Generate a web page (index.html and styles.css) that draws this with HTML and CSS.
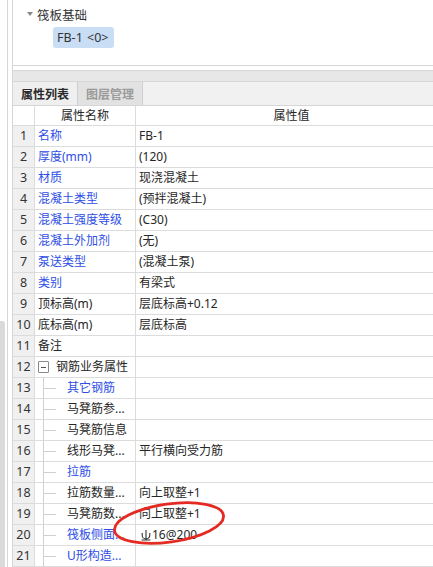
FILE: index.html
```html
<!DOCTYPE html>
<html>
<head>
<meta charset="utf-8">
<link rel="stylesheet" href="styles.css">
</head>
<body>
<div class="app">
  <div class="side">
    <div class="side-fill"></div>
    <div class="side-thumb"></div>
  </div>
  <div class="main">
    <div class="tree-panel">
      <div class="tree-node"><span class="caret"></span><span>筏板基础</span></div>
      <div class="tree-leaf"><span class="badge">FB-1 &lt;0&gt;</span></div>
    </div>
    <div class="grey-bar"></div>
    <div class="tabs">
      <div class="tab active">属性列表</div>
      <div class="tab">图层管理</div>
    </div>
    <div class="grid">
      <div class="row head"><div class="num"></div><div class="name center">属性名称</div><div class="val center">属性值</div></div>
      <div class="row"><div class="num">1</div><div class="name link">名称</div><div class="val">FB-1</div></div>
      <div class="row"><div class="num">2</div><div class="name link">厚度(mm)</div><div class="val">(120)</div></div>
      <div class="row"><div class="num">3</div><div class="name link">材质</div><div class="val">现浇混凝土</div></div>
      <div class="row"><div class="num">4</div><div class="name link">混凝土类型</div><div class="val">(预拌混凝土)</div></div>
      <div class="row"><div class="num">5</div><div class="name link">混凝土强度等级</div><div class="val">(C30)</div></div>
      <div class="row"><div class="num">6</div><div class="name link">混凝土外加剂</div><div class="val">(无)</div></div>
      <div class="row"><div class="num">7</div><div class="name link">泵送类型</div><div class="val">(混凝土泵)</div></div>
      <div class="row"><div class="num">8</div><div class="name link">类别</div><div class="val">有梁式</div></div>
      <div class="row"><div class="num">9</div><div class="name">顶标高(m)</div><div class="val">层底标高+0.12</div></div>
      <div class="row"><div class="num">10</div><div class="name">底标高(m)</div><div class="val">层底标高</div></div>
      <div class="row"><div class="num">11</div><div class="name">备注</div><div class="val"></div></div>
      <div class="row"><div class="num">12</div><div class="name group"><span class="toggle"></span><span>钢筋业务属性</span></div><div class="val"></div></div>
      <div class="row"><div class="num">13</div><div class="name child"><span class="guide"></span><span class="link">其它钢筋</span></div><div class="val"></div></div>
      <div class="row"><div class="num">14</div><div class="name child"><span class="guide"></span><span>马凳筋参...</span></div><div class="val"></div></div>
      <div class="row"><div class="num">15</div><div class="name child"><span class="guide"></span><span>马凳筋信息</span></div><div class="val"></div></div>
      <div class="row"><div class="num">16</div><div class="name child"><span class="guide"></span><span>线形马凳...</span></div><div class="val">平行横向受力筋</div></div>
      <div class="row"><div class="num">17</div><div class="name child"><span class="guide"></span><span class="link">拉筋</span></div><div class="val"></div></div>
      <div class="row"><div class="num">18</div><div class="name child"><span class="guide"></span><span>拉筋数量...</span></div><div class="val">向上取整+1</div></div>
      <div class="row"><div class="num">19</div><div class="name child"><span class="guide"></span><span>马凳筋数...</span></div><div class="val">向上取整+1</div></div>
      <div class="row"><div class="num">20</div><div class="name child"><span class="guide"></span><span class="link">筏板侧面...</span></div><div class="val"><svg class="steel" viewBox="0 0 10 12" width="10" height="12"><path d="M5 1 V10.5 M1.2 4 V6.5 A3.8 3.4 0 0 0 8.8 6.5 V4 M0.5 11 H9.5" fill="none" stroke="#333" stroke-width="1.1"/></svg>16@200</div></div>
      <div class="row"><div class="num">21</div><div class="name child"><span class="guide"></span><span class="link">U形构造...</span></div><div class="val"></div></div>
    </div>
  </div>
</div>
<svg class="mark" width="140" height="70" viewBox="0 0 140 70">
  <ellipse cx="70" cy="35" rx="55" ry="19" transform="rotate(-8 70 35)" fill="none" stroke="#e42a22" stroke-width="2.8"/>
</svg>
</body>
</html>
```
FILE: styles.css
```css
html, body {
  margin: 0;
  padding: 0;
}
body {
  width: 433px;
  height: 567px;
  overflow: hidden;
  position: relative;
  background: #fff;
  font-family: "Noto Sans", "Noto Sans CJK SC", sans-serif;
  font-size: 12px;
  color: #262626;
}
.app {
  display: flex;
  height: 567px;
}
.side {
  width: 7px;
  border-right: 1px solid #d6d6d6;
  display: flex;
  flex-direction: column;
  flex-shrink: 0;
}
.side-fill {
  flex: 1;
}
.side-thumb {
  height: 246px;
  width: 5px;
  background: #dadada;
  border-top-right-radius: 3px;
}
.main {
  margin-left: 4px;
  width: 434px;
  flex-shrink: 0;
  border-left: 1px solid #d6d6d6;
  display: flex;
  flex-direction: column;
}
.tree-panel {
  border-bottom: 1px solid #d6d6d6;
  box-sizing: border-box;
  height: 67px;
  padding-top: 5px;
}
.tree-node {
  display: flex;
  align-items: center;
  height: 18px;
  padding-left: 14px;
  color: #333;
  font-size: 12.5px;
}
.caret {
  width: 0;
  height: 0;
  border-left: 3px solid transparent;
  border-right: 3px solid transparent;
  border-top: 4px solid #888;
  margin-right: 4px;
}
.tree-leaf {
  padding-left: 40px;
  margin-top: 4px;
}
.badge {
  display: inline-block;
  height: 21px;
  line-height: 21px;
  padding: 0 5px 0 4px;
  background: #c9def5;
  border-radius: 3px;
  color: #333;
  font-size: 12.5px;
  word-spacing: 1px;
}
.grey-bar {
  margin-top: 4px;
  height: 11px;
  border-top: 1px solid #d6d6d6;
  background: #e7e7e7;
}
.tabs {
  display: flex;
  height: 23px;
  background: #f1f1f1;
  border-top: 1px solid #d6d6d6;
  border-bottom: 1px solid #d6d6d6;
}
.tab {
  width: 64px;
  border-right: 1px solid #cfcfcf;
  display: flex;
  align-items: center;
  justify-content: center;
  background: #e2e2e2;
  color: #9a9a9a;
  font-weight: bold;
  font-size: 12px;
}
.tab.active {
  background: #efefef;
  color: #2a2a2a;
}
.grid {
  display: flex;
  flex-direction: column;
}
.row {
  display: flex;
  height: 20px;
  border-bottom: 1px solid #dcdcdc;
  line-height: 20px;
}
.row.head {
  height: 19px;
  line-height: 19px;
}
.num {
  width: 21px;
  flex-shrink: 0;
  border-right: 1px solid #dcdcdc;
  background: #f0f0f0;
  text-align: center;
  color: #333;
  font-size: 12.5px;
}
.head .num {
  background: #fff;
}
.name {
  width: 97px;
  flex-shrink: 0;
  padding-left: 3px;
  border-right: 1px solid #dcdcdc;
  white-space: nowrap;
  overflow: hidden;
}
.val {
  flex: 1;
  padding-left: 3px;
  white-space: nowrap;
  overflow: hidden;
  display: flex;
  align-items: center;
}
.center {
  text-align: center;
  padding-left: 0;
  justify-content: center;
}
.head .name {
  width: 100px;
}
.link {
  color: #2e4ee6;
}
.group {
  display: flex;
  align-items: center;
}
.toggle {
  width: 9px;
  height: 10px;
  border: 1px solid #8a8a8a;
  border-radius: 1px;
  margin-right: 7px;
  display: flex;
  align-items: center;
  justify-content: center;
}
.toggle::before {
  content: "";
  width: 5px;
  border-top: 1px solid #555;
}
.child {
  display: flex;
  align-items: center;
  padding-left: 8px;
  width: 92px;
}
.guide {
  height: 20px;
  width: 12px;
  border-left: 1px solid #d0d0d0;
  display: flex;
  align-items: center;
  margin-right: 11px;
  flex-shrink: 0;
}
.guide::after {
  content: "";
  width: 12px;
  border-top: 1px solid #d0d0d0;
}
.steel {
  margin: 0 1px 1px 2px;
}
.mark {
  position: absolute;
  left: 99px;
  top: 488px;
}
```
